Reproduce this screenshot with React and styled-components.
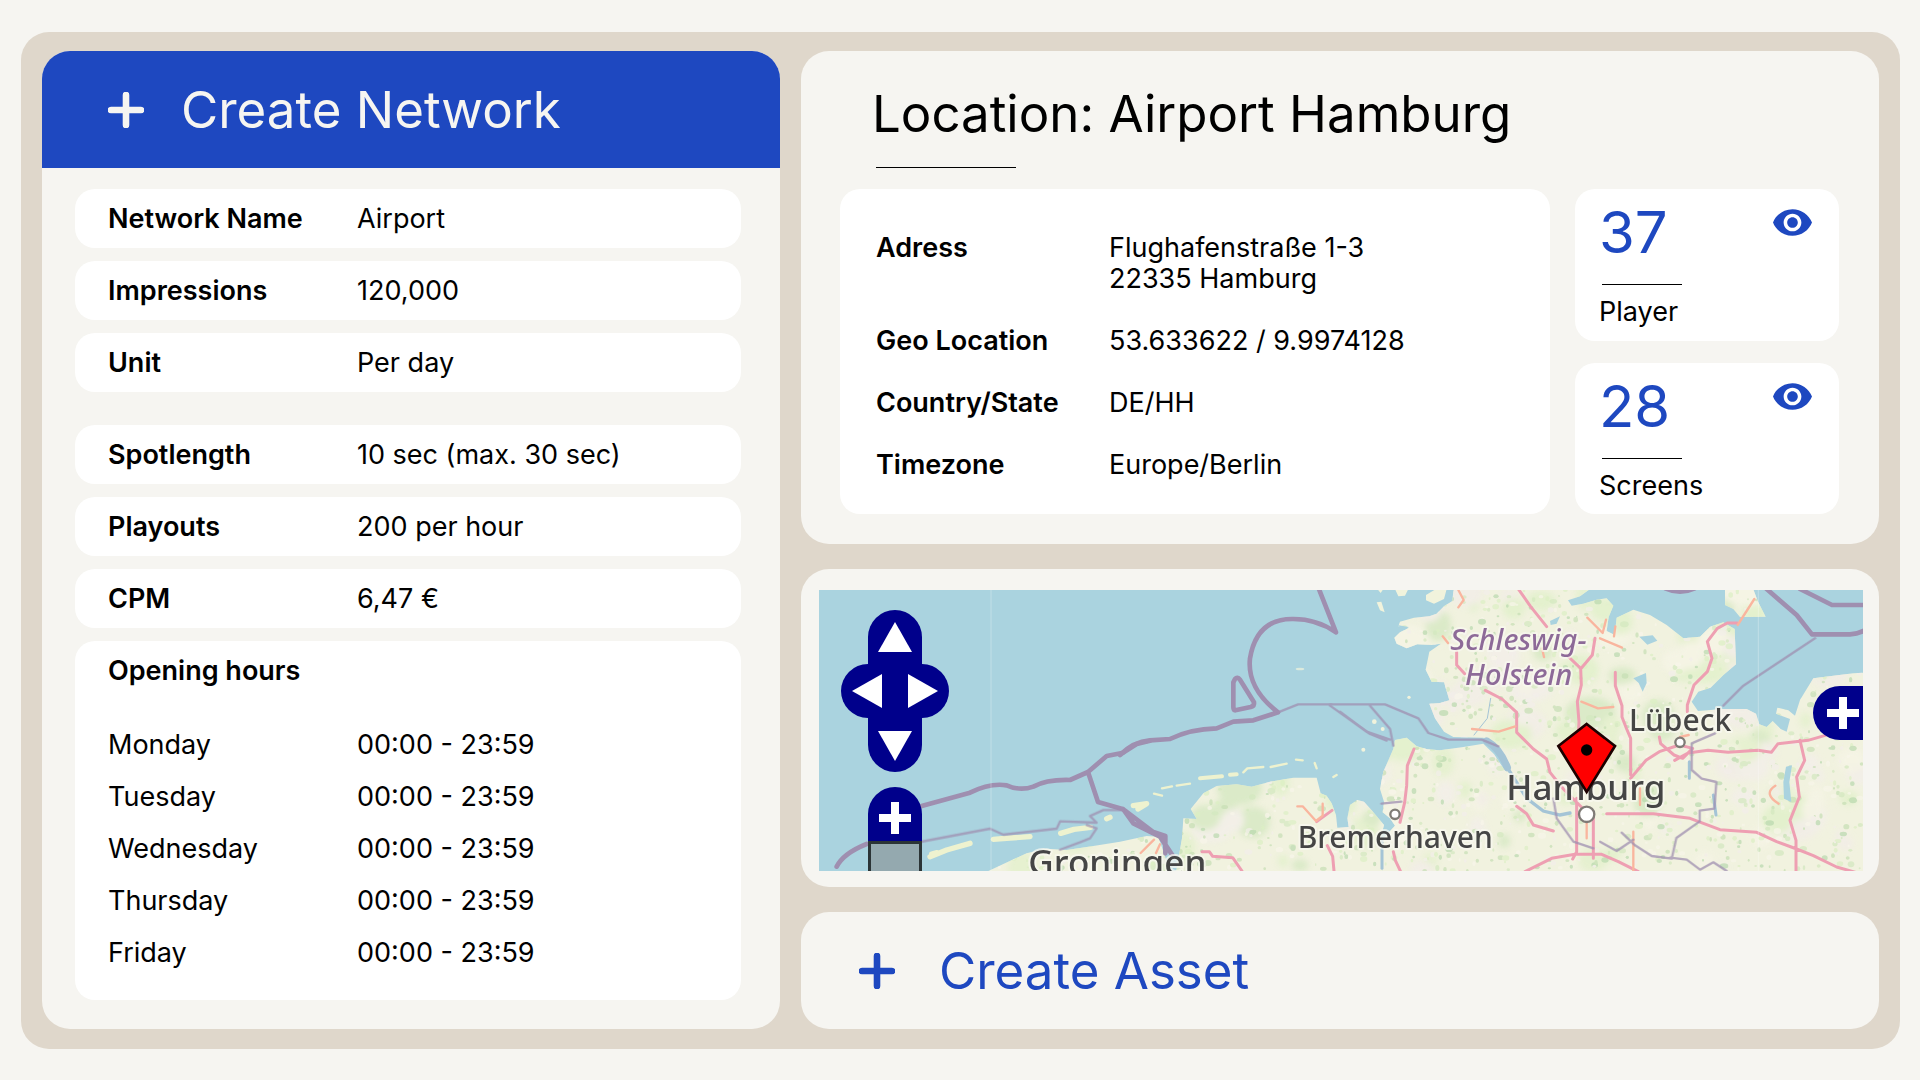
import React from "react";
import styled, { createGlobalStyle } from "styled-components";

const color = {
  paper: "#f6f5f1",
  sand: "#dfd7cb",
  blue: "#1e48c0",
  navy: "#00008b",
  white: "#ffffff",
  ink: "#000000",
};

const GlobalStyle = createGlobalStyle`
  *, *::before, *::after { box-sizing: border-box; }
  body {
    margin: 0;
    background: ${color.paper};
    color: ${color.ink};
    font-family: Inter, "Noto Sans", sans-serif;
    font-size: 27px;
    font-weight: 370;
    line-height: 31px;
  }
  h1, h2, dl, dd, p { margin: 0; }
  button { font: inherit; border: 0; padding: 0; cursor: pointer; }
`;

const Frame = styled.main`
  margin: 32px 20px 31px 21px;
  padding: 19px 21px 20px;
  border-radius: 28px;
  background: ${color.sand};
  display: grid;
  grid-template-columns: 738fr 1078fr;
  gap: 21px;
`;

const Panel = styled.section`
  background: ${color.paper};
  border-radius: 28px;
  overflow: hidden;
`;

const Stack = styled.div`
  display: flex;
  flex-direction: column;
  gap: 25px;
  min-width: 0;
`;

const CreateButton = styled.button`
  display: flex;
  align-items: center;
  gap: ${(p) => (p.$filled ? "37px" : "44px")};
  width: 100%;
  height: 117px;
  padding-left: ${(p) => (p.$filled ? "66px" : "58px")};
  background: ${(p) => (p.$filled ? color.blue : color.paper)};
  color: ${(p) => (p.$filled ? color.paper : color.blue)};
  border-radius: ${(p) => (p.$filled ? "0" : "28px")};
  font-size: 51px;
  line-height: 66px;
  text-align: left;
`;

const NetworkBody = styled.div`
  padding: 21px 39px 29px 33px;
  display: flex;
  flex-direction: column;
  gap: 13px;
`;

const FieldGroup = styled.dl`
  display: flex;
  flex-direction: column;
  gap: 13px;
  margin-bottom: ${(p) => (p.$spaced ? "20px" : "0")};
`;

const Field = styled.div`
  display: grid;
  grid-template-columns: 249px 1fr;
  align-items: center;
  height: 59px;
  padding-left: 33px;
  border-radius: 20px;
  background: ${color.white};
`;

const Term = styled.dt`
  font-weight: 600;
`;

const HoursCard = styled.section`
  padding: 0 33px 22px;
  border-radius: 20px;
  background: ${color.white};
`;

const HoursTitle = styled.h2`
  font-size: 27px;
  font-weight: 600;
  line-height: 59px;
  margin-bottom: 18px;
`;

const HoursTable = styled.table`
  border-collapse: collapse;
  text-align: left;
  th, td { height: 52px; padding: 0; font-weight: inherit; }
  th { width: 249px; }
`;

const LocationPanel = styled(Panel)`
  padding: 30px 40px 30px 39px;
`;

const LocationTitle = styled.h1`
  padding-left: 32px;
  font-size: 51px;
  font-weight: inherit;
  line-height: 66px;
`;

const Rule = styled.hr`
  width: ${(p) => p.$width};
  height: 1px;
  margin: ${(p) => p.$margin};
  border: 0;
  background: ${color.ink};
`;

const LocationGrid = styled.div`
  display: grid;
  grid-template-columns: 710fr 264fr;
  gap: 25px;
`;

const AddressCard = styled.dl`
  display: flex;
  flex-direction: column;
  gap: 31px;
  padding: 43px 36px 34px;
  border-radius: 20px;
  background: ${color.white};
`;

const AddressRow = styled.div`
  display: grid;
  grid-template-columns: 233px 1fr;
`;

const Stats = styled.div`
  display: flex;
  flex-direction: column;
  gap: 22px;
`;

const StatCard = styled.section`
  flex: 1;
  display: flex;
  justify-content: space-between;
  align-items: flex-start;
  padding: 8px 27px 13px 24px;
  border-radius: 20px;
  background: ${color.white};
`;

const StatNumber = styled.p`
  color: ${color.blue};
  font-size: 58px;
  line-height: 70px;
`;

const EyeButton = styled.button`
  display: flex;
  margin-top: 12px;
  background: none;
  color: ${color.blue};
`;

const MapPanel = styled(Panel)`
  padding: 21px 16px 16px 18px;
`;

const MapView = styled.div`
  position: relative;
  height: 281px;
  overflow: hidden;
  background: #aad3df;
`;

const MapCanvas = styled.svg`
  display: block;
  width: 100%;
  height: 100%;
`;

const PanZoom = styled.div`
  position: absolute;
  top: 20px;
  left: 22px;
  display: grid;
  grid-template-columns: 54px 54px;
  grid-template-rows: 54px 54px 54px 15px 54px 54px;
  justify-items: center;
`;

const radii = {
  up: "27px 27px 0 0",
  down: "0 0 27px 27px",
  left: "27px 0 0 27px",
  right: "0 27px 27px 0",
};

const MapButton = styled.button`
  grid-column: ${(p) => p.$column || "1 / 3"};
  grid-row: ${(p) => p.$row};
  width: 54px;
  height: 54px;
  border-radius: ${(p) => radii[p.$round]};
  background: ${color.navy};
  color: ${color.white};
  svg { display: block; }
`;

const ZoomTrack = styled.div`
  grid-column: 1 / 3;
  grid-row: 6;
  width: 54px;
  border: 3px solid #2b3436;
  background: #94a9af;
`;

const LayerSwitch = styled.div`
  position: absolute;
  top: 96px;
  right: -4px;
`;

const Plus = () => (
  <svg width="36" height="36" viewBox="0 0 36 36" aria-hidden="true">
    <path d="M18 3v30M3 18h30" stroke="currentColor" strokeWidth="6.6" strokeLinecap="round" />
  </svg>
);

const Eye = () => (
  <svg width="39" height="27" viewBox="1 4.5 22 15" aria-hidden="true">
    <path
      fill="currentColor"
      d="M12 4.5C7 4.5 2.73 7.61 1 12c1.73 4.39 6 7.5 11 7.5s9.27-3.11 11-7.5c-1.73-4.39-6-7.5-11-7.5zM12 17c-2.76 0-5-2.24-5-5s2.24-5 5-5 5 2.24 5 5-2.24 5-5 5zm0-8c-1.66 0-3 1.34-3 3s1.34 3 3 3 3-1.34 3-3-1.34-3-3-3z"
    />
  </svg>
);

const glyphs = {
  up: "M27 12L44 42H10z",
  down: "M27 43L44 13H10z",
  left: "M11 27L41 10V44z",
  right: "M43 27L13 10V44z",
  zoomIn: "M23 15h8v12h12v8H31v12h-8V35H11v-8h12z",
  layers: "M26 11h8v12h12v8H34v12h-8V31H14v-8h12z",
};

const MapGlyph = ({ name }) => (
  <svg width="54" height="54" viewBox="0 0 54 54" aria-hidden="true">
    <path d={glyphs[name]} fill="currentColor" />
  </svg>
);

/* Woodland, heath and meadow patches scattered over the land. */
const scatter = (count, seed, minR, maxR, tones) => {
  const next = () => {
    seed = (seed * 16807) % 2147483647;
    return seed / 2147483647;
  };
  return Array.from({ length: count }, () => {
    const r = minR + next() * (maxR - minR);
    return {
      cx: Math.round(350 + next() * 2780),
      cy: Math.round(next() * 843),
      rx: Math.round(r * (0.6 + next())),
      ry: Math.round(r),
      fill: tones[Math.floor(next() * tones.length)],
    };
  });
};
const meadows = scatter(260, 41, 18, 50, ["#e2f0cb", "#f2ece8", "#f3eeea", "#dff0c8", "#f6f4e6", "#d3e7c0"]);
const woods = scatter(2200, 977, 3, 9, ["#c6dfb4", "#dcefc4", "#f3eeea", "#d3e8bf", "#f8f6ea", "#b9d9ae"]);

const LAND_MAIN =
  "M345 0L340 20 337 48 312 64 290 86 268 94 222 98 180 110 175 124 207 128 180 142 163 158 170 176 200 190 232 178 275 180 303 176 268 200 257 254 275 290 312 292 328 346 300 354 268 356 285 400 312 440 340 456 430 458 468 474 500 545 490 550 462 508 430 476 370 486 300 496 262 493 230 484 200 458 165 465 160 492 130 560 120 612 132 650 128 682 150 700 165 722 125 765 128 870 122 760 132 720 95 676 72 650 52 645 30 660 22 700 26 726 -8 728 -12 690 -25 655 -40 632 -58 625 -70 578 -140 578 -210 590 -265 605 -310 598 -370 603 -410 625 -448 672 -430 702 -470 700 -474 760 -495 880H1600V262L1540 265 1480 272 1420 280 1395 320 1380 345 1365 392 1345 376 1312 368 1308 386 1350 402 1340 440 1322 432 1298 408 1280 426 1258 418 1248 386 1220 372 1150 372 1074 378 1055 350 1075 320 1112 308 1150 270 1188 238 1184 132 1150 112 1110 125 1080 155 1030 160 980 120 930 90 880 74 830 98 824 150 800 138 806 96 820 62 800 40 770 44 730 56 695 62 684 46 720 34 750 12V0z";
const LAND_WEST =
  "M370 400L430 372 500 340 560 326 620 330 700 318 780 305 860 288 895 290 912 340 930 400z";

const MapArtwork = () => (
  <MapCanvas viewBox="0 0 3132 843" preserveAspectRatio="xMidYMid slice" role="img" aria-label="Map of northern Germany">
    <defs>
      <filter id="soft">
        <feGaussianBlur stdDeviation="9" />
      </filter>
      <clipPath id="land">
        <path d={LAND_MAIN} transform="translate(1563 -15)" />
        <path d={LAND_WEST} transform="translate(123 450)" />
        <path d="M375 0V60L400 72 420 96 497 95 474 50 455 0z" transform="translate(2343 -15)" />
      </clipPath>
    </defs>
    <rect width="3132" height="843" fill="#aad3df" />
    <g clipPath="url(#land)">
      <rect width="3132" height="843" fill="#f1f2df" />
      <g filter="url(#soft)" opacity=".75">
        {meadows.map((s, i) => <ellipse key={i} {...s} />)}
      </g>
      <g opacity=".7">
        {woods.map((s, i) => <ellipse key={i} {...s} />)}
      </g>
    </g>

    {/* islands and lakes */}
    <g transform="translate(1563 -15)" fill="#f1f3dc">
      <path d="M258 30l30-18h32l-8 30-30 14-24-10zM165 12h40l-10 20-20 2zM110 52l14-2 10 32-14-6zM112 12h18l-8 12z" />
      <circle cx="207" cy="337" r="5" />
      <circle cx="70" cy="494" r="6" />
      <circle cx="103" cy="410" r="7" />
      <circle cx="128" cy="432" r="6" />
      <ellipse cx="-120" cy="252" rx="13" ry="4" opacity=".7" />
      <g fill="#aad3df">
        <path d="M630 108l30-14-10 22-18 4zM172 120l34 6-14 10z" />
        <path d="M898 155l40-4 14 16-30 12zM880 280l38-16 2 30-12 26-12-26zM1338 545l18-4-8 50 6 60-22-10-2-50z" />
      </g>
    </g>
    <g fill="none" stroke="#eef2cf" strokeLinecap="round" strokeLinejoin="round">
      <g transform="translate(903 -15)" strokeWidth="7">
        <path d="M102 626l24 6M126 610l30-6M170 602l40-6M370 562l12-12 48-4M452 546l48-10M528 524l20 2M584 534l6 16M640 576l10-6" />
        <path d="M240 580l66-6M330 569l20-1" strokeWidth="12" />
        <path d="M40 662l40-6-26 16" strokeWidth="16" />
      </g>
      <g transform="translate(123 450)" strokeWidth="16">
        <path d="M210 350l50-20 70-20M400 298l50-4 60-4M602 280l40-12 50-6M740 236l10-4M215 342l16-4" />
      </g>
    </g>

    {/* rivers */}
    <g transform="translate(1563 -15)" fill="none" stroke="#a4c4d6" strokeLinecap="round">
      <path d="M440 468Q480 490 502 548" strokeWidth="22" />
      <path d="M502 548L560 640 610 678 660 690 690 684" strokeWidth="10" />
      <path d="M126 760v90" strokeWidth="9" />
      <path d="M1048 530v50M1120 630l8 60M860 550" strokeWidth="9" />
      <path d="M452 340l-10 60-40 50" strokeWidth="3" />
    </g>

    {/* roads */}
    <g fill="none" stroke="#ee9fb2" strokeWidth="9" strokeLinejoin="round" strokeLinecap="round">
      <g transform="translate(1563 -15)">
        <path d="M535 12L572 65 620 125M680 210l42 40 2 50-12 50 5 60-5 100M765 160l-8 50-32 38M350 200v40l24 26M436 316l50 26 44 40v60l50 50 40 30 10 40 40 50 60 60M826 262v40l20 60v34l14 36 12 28v110M222 492l-20 50-2 60-6 50-14 60M710 640v160l-12 22M760 700v120M530 664l30 22 20 34 60 18M160 800l6 26 16 34M555 860l80-40 70-12h80l50 22 60 30" />
        <path d="M872 580l46-54 40-26 60-20 40 10-30 30-26-10-40-34-4-20M1004 526l40-22 60-8 60 6 90-6 40 6 20-26 90-10 70-20M1380 466l14 60-24 50 8 60-28 70 18 60v110M800 686h140l110 14 90 34 110 8 60 28 60 22 50 20 70 34 70 20 50 40M1042 380v-20l20-60 40-40 14-40-14-50 30-40 30-16h30" />
      </g>
      <g transform="translate(903 -15)">
        <path d="M636 676l-46 34M246 800h22l10 14 60 4 28 40M622 782l16 32 4 44" />
      </g>
    </g>
    <g fill="none" stroke="#f9b59e" strokeWidth="7" strokeLinejoin="round" strokeLinecap="round">
      <g transform="translate(1563 -15)">
        <path d="M355 15l16 30-16 22M308 154l16 20M396 432l80 8 50-16M606 190l6 26M742 98l46 46 10-40M780 160l66 28M826 124l-4 30M724 350l50 20 46-4M1193 120l50-78M1306 602q-38 24 10 54M900 610v50M740 700v60M880 740v120M1020 456l26-6" />
      </g>
      <g transform="translate(903 -15)">
        <path d="M532 664h16l40 44 20-16v-36M62 804l40-40M108 804l12-26" />
      </g>
    </g>

    {/* territorial borders */}
    <g fill="none" stroke="#9f8fb0" strokeLinejoin="round" strokeLinecap="round">
      <g transform="translate(123 450)" strokeWidth="14">
        <path d="M185 198L330 158Q390 128 440 136 480 154 520 140 560 118 630 120L684 96 740 48 790 38 830 12 870 2M684 96L714 186 790 208 820 250 900 290 940 350M790 208L880 276 916 288V340M-70 380Q-50 340 20 312" />
      </g>
      <g transform="translate(903 -15)" strokeWidth="14">
        <path d="M0 510Q40 470 90 466L150 462Q210 432 290 430L340 410 400 406 474 382M474 382Q380 310 390 220 410 100 520 102 590 102 648 142L592 0" />
        <path d="M345 282Q352 274 360 284L402 352Q404 362 392 366L346 376Q340 376 340 366V292z" />
      </g>
      <g transform="translate(2343 -15)" strokeWidth="14">
        <path d="M500 12L590 90 636 148H750Q780 146 800 132M600 12L696 60H800M196 10Q240 30 284 10" />
      </g>
      <g strokeWidth="7" opacity=".75">
        <path d="M474 382l60-24h100M630 362l120 85 50 20" transform="translate(903 -15)" />
        <path d="M-30 358H135l100 42 30 44 60 20h100l50 20M90 362l60 70 10 50M0 380l80 60 70 24M124 656l60-6M640 640l10 60 50 70 60 20" transform="translate(1563 -15)" />
        <path d="M645 160L430 302 370 362M345 445l-70 30v80l30 26 44 10-6 80-44 6v32l-70 50-14 62-60-8-50-32-40-38M210 818l50 6 40 30 40-22 40 26M0 770l50 28 50-34" transform="translate(2343 -15)" />
        <path d="M60 350l40-28 100-20 190-36 40 18 160-18 10-22 110 4-20-20 40-18h60M680 255l30 10-20 30-30 12-60 22" transform="translate(123 450)" />
      </g>
    </g>

    <path d="M516 0v843M2818 0v843" stroke="#fff" strokeWidth="3" opacity=".28" />

    {/* places */}
    <g fontFamily='"Noto Sans", sans-serif' fontWeight="500" fill="#454545" stroke="#f8f8f0" strokeWidth="12" strokeOpacity=".75" strokeLinejoin="round" paintOrder="stroke">
      <g fill="#8d6a98" fontStyle="italic" fontSize="87">
        <text x="1894" y="180">Schleswig-</text>
        <text x="1938" y="285">Holstein</text>
      </g>
      <text x="2430" y="422" fontSize="90">Lübeck</text>
      <text x="1436" y="775" fontSize="90">Bremerhaven</text>
      <text x="2062" y="630" fontSize="105">Hamburg</text>
      <text x="628" y="856" fontSize="105">Groningen</text>
    </g>
    <g fill="#fff" stroke="#7f7b76" strokeWidth="7">
      <circle cx="2303" cy="673" r="23" />
      <circle cx="2583" cy="457" r="14" />
      <circle cx="1728" cy="673" r="14" />
    </g>
    <path d="M2303 402L2388 468 2303 606 2218 468z" fill="#f00" stroke="#1c0000" strokeWidth="8" />
    <circle cx="2303" cy="480" r="17" />
  </MapCanvas>
);

const networkFields = [
  ["Network Name", "Airport"],
  ["Impressions", "120,000"],
  ["Unit", "Per day"],
];
const spotFields = [
  ["Spotlength", "10 sec (max. 30 sec)"],
  ["Playouts", "200 per hour"],
  ["CPM", "6,47 €"],
];
const days = ["Monday", "Tuesday", "Wednesday", "Thursday", "Friday"];
const addressFields = [
  ["Adress", <>Flughafenstraße 1-3<br />22335 Hamburg</>],
  ["Geo Location", "53.633622 / 9.9974128"],
  ["Country/State", "DE/HH"],
  ["Timezone", "Europe/Berlin"],
];
const stats = [
  ["37", "Player"],
  ["28", "Screens"],
];

const Fields = ({ items, spaced }) => (
  <FieldGroup $spaced={spaced}>
    {items.map(([label, value]) => (
      <Field key={label}>
        <Term>{label}</Term>
        <dd>{value}</dd>
      </Field>
    ))}
  </FieldGroup>
);

export default function App() {
  return (
    <>
      <GlobalStyle />
      <Frame>
        <Panel>
          <CreateButton type="button" $filled>
            <Plus />
            Create Network
          </CreateButton>
          <NetworkBody>
            <Fields items={networkFields} spaced />
            <Fields items={spotFields} />
            <HoursCard>
              <HoursTitle>Opening hours</HoursTitle>
              <HoursTable>
                <tbody>
                  {days.map((day) => (
                    <tr key={day}>
                      <th scope="row">{day}</th>
                      <td>00:00 - 23:59</td>
                    </tr>
                  ))}
                </tbody>
              </HoursTable>
            </HoursCard>
          </NetworkBody>
        </Panel>

        <Stack>
          <LocationPanel>
            <LocationTitle>Location: Airport Hamburg</LocationTitle>
            <Rule $width="140px" $margin="20px 0 21px 36px" />
            <LocationGrid>
              <AddressCard>
                {addressFields.map(([label, value]) => (
                  <AddressRow key={label}>
                    <Term>{label}</Term>
                    <dd>{value}</dd>
                  </AddressRow>
                ))}
              </AddressCard>
              <Stats>
                {stats.map(([count, label]) => (
                  <StatCard key={label}>
                    <div>
                      <StatNumber>{count}</StatNumber>
                      <Rule $width="80px" $margin="17px 0 11px 3px" />
                      <p>{label}</p>
                    </div>
                    <EyeButton type="button" aria-label={label}>
                      <Eye />
                    </EyeButton>
                  </StatCard>
                ))}
              </Stats>
            </LocationGrid>
          </LocationPanel>

          <MapPanel>
            <MapView>
              <MapArtwork />
              <PanZoom>
                <MapButton type="button" aria-label="Up" $row="1" $round="up"><MapGlyph name="up" /></MapButton>
                <MapButton type="button" aria-label="Left" $row="2" $column="1" $round="left"><MapGlyph name="left" /></MapButton>
                <MapButton type="button" aria-label="Right" $row="2" $column="2" $round="right"><MapGlyph name="right" /></MapButton>
                <MapButton type="button" aria-label="Down" $row="3" $round="down"><MapGlyph name="down" /></MapButton>
                <MapButton type="button" aria-label="Zoom in" $row="5" $round="up"><MapGlyph name="zoomIn" /></MapButton>
                <ZoomTrack />
              </PanZoom>
              <LayerSwitch>
                <MapButton type="button" aria-label="Layers" $round="left"><MapGlyph name="layers" /></MapButton>
              </LayerSwitch>
            </MapView>
          </MapPanel>

          <CreateButton type="button">
            <Plus />
            Create Asset
          </CreateButton>
        </Stack>
      </Frame>
    </>
  );
}
